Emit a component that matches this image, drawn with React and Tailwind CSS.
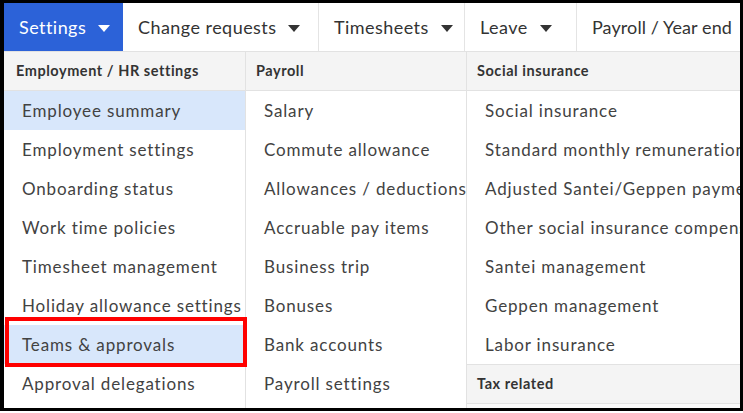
import { Fragment } from "react";

const tabs = [
  { label: "Settings", active: true, caret: true, w: "w-[119px] tracking-[0.45px]" },
  { label: "Change requests", caret: true, w: "w-[196px] tracking-[0.45px]" },
  { label: "Timesheets", caret: true, w: "w-[146px] tracking-[0.45px]" },
  { label: "Leave", caret: true, w: "w-[112px] tracking-[0.45px]" },
  { label: "Payroll / Year end", last: true, w: "w-[180px] tracking-[0.1px]" },
];

const hr = [
  "Employee summary",
  "Employment settings",
  "Onboarding status",
  "Work time policies",
  "Timesheet management",
  "Holiday allowance settings",
  "Teams & approvals",
  "Approval delegations",
];

const payroll = [
  "Salary",
  "Commute allowance",
  "Allowances / deductions",
  "Accruable pay items",
  "Business trip",
  "Bonuses",
  "Bank accounts",
  "Payroll settings",
];

const social = [
  "Social insurance",
  "Standard monthly remuneration",
  "Adjusted Santei/Geppen payments",
  "Other social insurance compensation",
  "Santei management",
  "Geppen management",
  "Labor insurance",
];

function Caret({ white }) {
  return (
    <svg width="12" height="7" viewBox="0 0 12 7" className="ml-[12px] mt-[3px] shrink-0">
      <path d="M0 0 L12 0 L6 7 Z" fill={white ? "#ffffff" : "#333333"} />
    </svg>
  );
}

function Header({ children, pl }) {
  return (
    <div
      className={`h-[39px] shrink-0 flex items-center bg-[#f4f4f4] border-b border-[#e2e2e2] text-[14.5px] tracking-[0.55px] font-bold text-[#333] whitespace-nowrap ${pl}`}
    >
      {children}
    </div>
  );
}

function Item({ label, highlight, marked }) {
  return (
    <div
      className={`relative h-[39px] shrink-0 flex items-center pl-[18px] text-[17px] tracking-[0.85px] text-[#424242] whitespace-nowrap ${
        highlight ? "bg-[#d8e7fb]" : ""
      }`}
    >
      {label}
      {marked && (
        <div className="absolute left-[1px] right-[-2px] top-[-8px] bottom-[-3px] border-[4px] border-[#ff0000]" />
      )}
    </div>
  );
}

export default function App() {
  return (
    <div
      className="w-[743px] h-[413px] bg-white overflow-hidden"
      style={{ fontFamily: "Lato, 'Open Sans', sans-serif" }}
    >
      <div className="w-[743px] h-[411px] border-l-[4px] border-t-[3px] border-r-[3px] border-b-[3px] border-black flex flex-col overflow-hidden">
        <div className="h-[49px] shrink-0 flex border-b border-[#e2e2e2] overflow-hidden">
          {tabs.map((t) => (
            <div
              key={t.label}
              className={`flex items-center shrink-0 pl-[15px] text-[18px] whitespace-nowrap ${t.w} ${
                t.active
                  ? "bg-[#2c62d8] text-white"
                  : t.last
                  ? "text-[#333]"
                  : "text-[#333] border-r border-[#e4e4e4]"
              }`}
            >
              {t.label}
              {t.caret && <Caret white={t.active} />}
            </div>
          ))}
        </div>
        <div className="flex flex-1 min-h-0">
          <div className="w-[242px] shrink-0 flex flex-col border-r border-[#e2e2e2]">
            <Header pl="pl-[12px]">Employment / HR settings</Header>
            {hr.map((l, i) => (
              <Item key={l} label={l} highlight={i === 0 || i === 6} marked={i === 6} />
            ))}
          </div>
          <div className="w-[221px] shrink-0 flex flex-col border-r border-[#e2e2e2]">
            <Header pl="pl-[10px]">Payroll</Header>
            {payroll.map((l) => (
              <Item key={l} label={l} />
            ))}
          </div>
          <div className="flex-1 min-w-0 flex flex-col overflow-hidden bg-[#fafafa]">
            <Header pl="pl-[10px]">Social insurance</Header>
            <div className="bg-white flex flex-col">
              {social.map((l) => (
                <Fragment key={l}>
                  <Item label={l} />
                </Fragment>
              ))}
            </div>
            <div className="border-t border-[#e2e2e2]">
              <Header pl="pl-[10px]">Tax related</Header>
            </div>
          </div>
        </div>
      </div>
    </div>
  );
}
